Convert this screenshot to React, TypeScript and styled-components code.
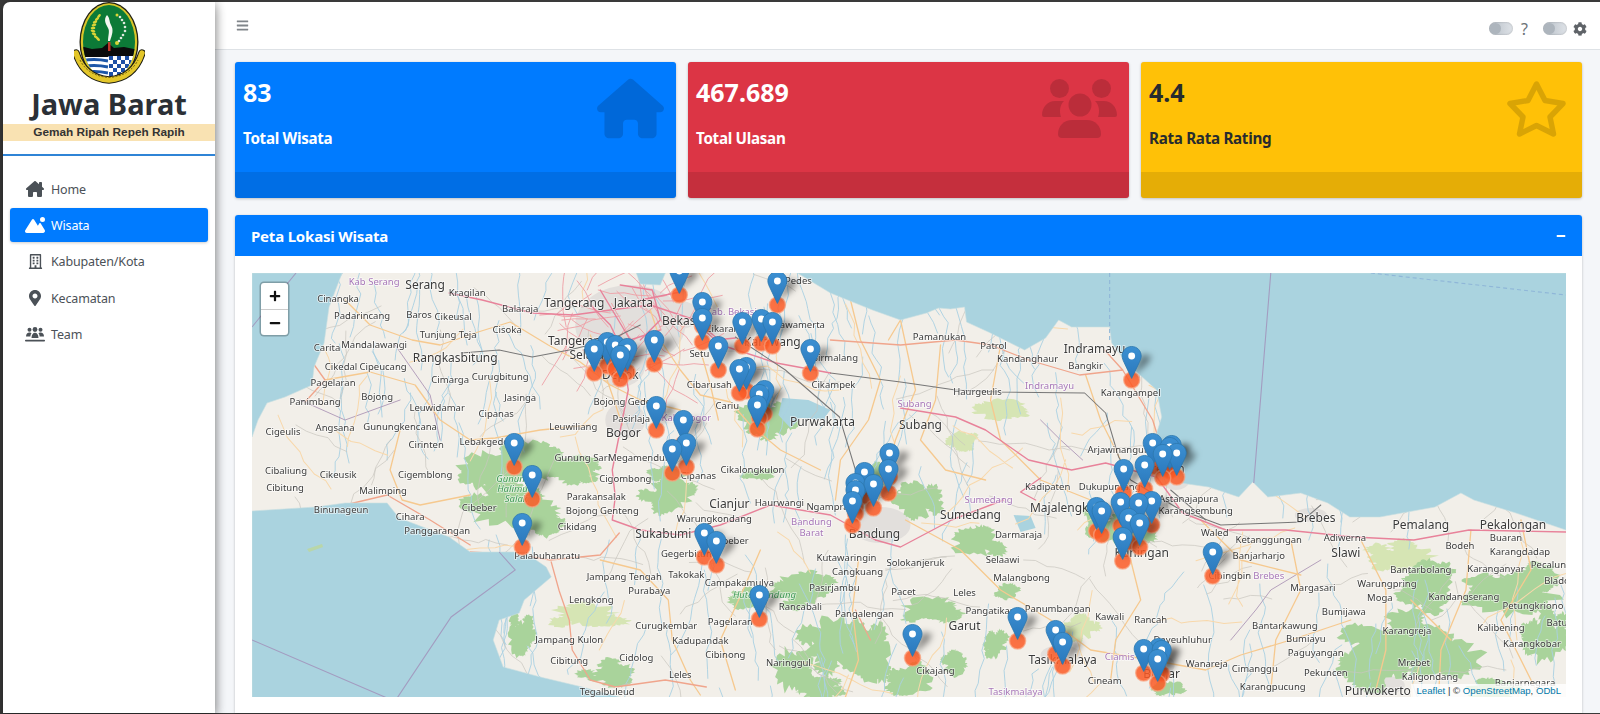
import React from "react";
import styled, { createGlobalStyle } from "styled-components";
import { FaMapMarkerAlt, FaCog, FaBars, FaRegBuilding, FaPlus, FaMinus } from "react-icons/fa";
import { FaMountainSun, FaHouse, FaHouseChimney } from "react-icons/fa6";

const Global = createGlobalStyle`
  html, body { margin: 0; padding: 0; height: 714px; overflow: hidden; background: #343434; }
  * { box-sizing: border-box; }
`;

const Frame = styled.div`
  height: 714px; padding: 2px 0 1px 3px; background: #3a3a3a; display: flex;
  font-family: "Noto Sans", "Open Sans", sans-serif; overflow: hidden;
`;
const Sidebar = styled.aside`
  width: 212px; flex: none; background: #fff; border-top-left-radius: 7px; position: relative; z-index: 2;
  box-shadow: 0 6px 12px rgba(0,0,0,.3), 2px 0 8px rgba(0,0,0,.22);
`;
const Brand = styled.div`
  display: flex; flex-direction: column; align-items: center; height: 154px; border-bottom: 2px solid #2f84d6;
`;
const Title = styled.div`
  font-weight: 700; font-size: 29px; line-height: 34px; color: #2b3036; margin-top: 1px; white-space: nowrap;
`;
const Motto = styled.div`
  align-self: stretch; height: 17px; margin-top: 3px; background: #f9e2b2; text-align: center;
  font-family: "Liberation Sans", sans-serif; font-weight: 700; font-size: 11.800px; line-height: 17px; color: #333;
`;
const Nav = styled.nav` padding: 16px 7px 0; display: flex; flex-direction: column; gap: 2.400px; `;
const NavItem = styled.div<{ $active?: boolean }>`
  height: 34px; border-radius: 3px; display: flex; align-items: center; padding-left: 15px; gap: 6px;
  background: ${p => (p.$active ? "#007bff" : "transparent")};
  color: ${p => (p.$active ? "#fff" : "#4b5157")};
  box-shadow: ${p => (p.$active ? "0 1px 3px rgba(0,0,0,.2)" : "none")};
  font-size: 12.500px; letter-spacing: -.15px;
`;
const NavIcon = styled.span`
  width: 20px; display: flex; justify-content: center; color: inherit;
`;
const Main = styled.main` flex: 1; min-width: 0; display: flex; flex-direction: column; background: #f4f6f9; `;
const TopBar = styled.header`
  height: 48px; flex: none; background: #fff; border-bottom: 1px solid #dee2e6; display: flex; align-items: center;
  padding: 0 13px 0 21px; color: #7b8086;
`;
const Burger = styled.span` display: flex; font-size: 13px; margin-top: -1px; color: #80858a; `;
const Spacer = styled.div` flex: 1; `;
const Toggle = styled.span`
  width: 24px; height: 13px; border-radius: 7px; background: linear-gradient(90deg, #b6bec6, #dfe3e8); display: block;
  position: relative; box-shadow: inset 0 0 2px rgba(0,0,0,.25); margin-top: 6px;
  &::after { content: ""; position: absolute; left: 1px; top: 1px; width: 11px; height: 11px; border-radius: 50%; background: #adb5bd; }
`;
const Help = styled.span` font-size: 16px; line-height: 18px; margin: 6px 15px 0 8px; color: #6c7278; `;
const Gear = styled.span` display: flex; font-size: 14px; margin: 6px 0 0 6px; color: #5f6368; `;
const Content = styled.div` flex: 1; min-height: 0; padding: 12px 18px 0 20px; display: flex; flex-direction: column; gap: 17px; `;
const Stats = styled.div` display: grid; grid-template-columns: repeat(3, 1fr); gap: 12px; flex: none; `;
const Stat = styled.div<{ $bg: string; $fg: string }>`
  height: 136px; border-radius: 3px; background: ${p => p.$bg}; color: ${p => p.$fg}; position: relative; overflow: hidden;
  box-shadow: 0 0 1px rgba(0,0,0,.13), 0 1px 3px rgba(0,0,0,.2); padding: 12px 8px;
`;
const StatValue = styled.div` font-weight: 700; font-size: 25px; line-height: 36px; `;
const StatLabel = styled.div` font-weight: 700; font-size: 15.200px; line-height: 20px; margin-top: 18px; letter-spacing: -.3px; `;
const StatIcon = styled.span<{ $right: number }>`
  position: absolute; right: ${p => p.$right}px; top: 17px; height: 59px; display: flex; align-items: center; color: rgba(0,0,0,.15);
`;
const StatFoot = styled.div` position: absolute; left: 0; right: 0; bottom: 0; height: 26px; background: rgba(0,0,0,.1); `;
const MapCard = styled.section`
  flex: 1; min-height: 0; background: #fff; border-radius: 3px 3px 0 0; overflow: hidden;
  box-shadow: 0 0 1px rgba(0,0,0,.13), 0 1px 3px rgba(0,0,0,.2); display: flex; flex-direction: column;
`;
const CardHead = styled.div`
  height: 41px; flex: none; background: #007bff; color: #fff; display: flex; align-items: center; justify-content: space-between;
  padding: 0 16px 0 16px; font-weight: 700; font-size: 15px; letter-spacing: -.2px;
`;
const CollapseIcon = styled.span` display: flex; font-size: 10px; `;
const CardBody = styled.div` padding: 17px 16px 0 17px; `;
const MapBox = styled.div` height: 424px; position: relative; overflow: hidden; background: #f2efe9; `;
const MapSvg = styled.svg` display: block; width: 100%; height: 100%; filter: blur(.35px); `;
const Zoom = styled.div`
  position: absolute; left: 9px; top: 10px; width: 27px; border-radius: 3px; background: #fff; overflow: hidden;
  box-shadow: 0 0 0 1.500px rgba(0,0,0,.25);
`;
const ZoomBtn = styled.div`
  height: 26px; display: flex; align-items: center; justify-content: center; color: #111; font-size: 12px;
  & + & { border-top: 1px solid #ccc; }
`;
const Attribution = styled.div`
  position: absolute; right: 0; bottom: 0; padding: 0 5px; background: rgba(255,255,255,.8);
  font-family: "Liberation Sans", sans-serif; font-size: 9.600px; line-height: 13px; color: #333;
`;
const AttrLink = styled.span` color: #0078a8; `;

/* ---------- map data (page coordinates) ---------- */
type L = [string, number, number, number?];
// 0 small, 1 big, 2 purple, 3 green
const labels: L[] = [
  ["Kab Serang",374,282,2],["Serang",425,286,1],["Kragilan",467,293],["Balaraja",520,309],["Tangerang",574,304,1],["Jakarta",633,304,1],
  ["Cinangka",338,299],["Padarincang",362,316],["Baros",419,315],["Cikeusal",453,317],["Tunjung Teja",448,335],["Cisoka",507,330],
  ["Bekasi",680,322,1],["Kab. Bekasi",731,312,2],["Cikarang",725,329],["Rawamerta",799,325],["Pedes",798,281],["Carita",327,348],
  ["Mandalawangi",374,345],["Tangerang",578,342,1],["Selatan",590,356,1],["Rangkasbitung",455,359,1],["Cikedal",341,367],["Cipeucang",383,367],
  ["Cimarga",450,380],["Curugbitung",500,377],["Setu",699,354],["Karawang",772,343,1],["Sirmalang",835,358],["Depok",620,376,1],
  ["Pagelaran",333,383],["Panimbang",315,402],["Bojong",377,397],["Leuwidamar",437,408],["Jasinga",520,398],["Bojong Gede",622,402],
  ["Cibarusah",709,385],["Cikampek",833,385],["Cipanas",496,414],["Pasirlaja",631,419],["Kab. Bogor",686,418,2],["Cariu",727,406],
  ["Purwakarta",822,423,1],["Cigeulis",283,432],["Angsana",335,428],["Gunungkencana",400,427],["Leuwiliang",573,427],["Bogor",623,434,1],
  ["Cirinten",426,445],["Lebakgedong",490,442],["Gunung Sari",582,458],["Megamendung",642,458],["Cikalongkulon",752,470],["Cipanas",698,476],
  ["Cibaliung",286,471],["Cikeusik",338,475],["Cigemblong",425,475],["Cigombong",625,479],["Gunung",513,479,3],["Halimun",515,489,3],["Salak",516,499,3],
  ["Cibitung",285,488],["Malimping",383,491],["Parakansalak",596,497],["Bojong Genteng",602,511],["Binunageun",341,510],["Cibeber",479,508],
  ["Cihara",410,517],["Cikidang",577,527],["Panggarangan",437,531],["Cianjur",729,505,1],["Haurwangi",779,503],["Ngamprah",830,507],
  ["Bandung",811,522,2],["Barat",811,533,2],["Bandung",874,535,1],["Warungkondang",714,519],["Sukabumi",663,535,1],["Gegerbitung",689,554],
  ["Cibeber",731,541],["Palabuhanratu",547,556],["Kutawaringin",846,558],["Solokanjeruk",915,563],["Cangkuang",857,572],["Jampang Tengah",624,577],
  ["Takokak",686,575],["Campakamulya",739,583],["Purabaya",649,591],["Pasirjambu",834,588],["Hutan Lindung",764,595,3],["Lengkong",591,600],
  ["Rancabali",800,607],["Pangalengan",864,614],["Pagelaran",730,622],["Curugkembar",666,626],["Jampang Kulon",569,640],["Kadupandak",700,641],
  ["Cibinong",725,655],["Cidolog",636,658],["Cibitung",569,661],["Naringgul",788,663],["Leles",680,675],["Tegalbuleud",607,692],["Pacet",903,592],
  ["Pamanukan",939,337],["Patrol",993,346],["Kandanghaur",1027,359],["Indramayu",1094,350,1],["Bangkir",1085,366],["Haurgeulis",977,392],
  ["Indramayu",1049,386,2],["Karangampel",1130,393],["Subang",914,404,2],["Subang",920,426,1],["Arjawinangun",1118,450],["Cirebon",1162,470,1],
  ["Kadipaten",1047,487],["Dukupuntang",1109,487],["Astanajapura",1188,499],["Sumedang",988,500,2],["Majalengka",1062,509,1],["Karangsembung",1195,511],
  ["Sumedang",970,516,1],["Brebes",1315,519,1],["Pemalang",1420,526,1],["Pekalongan",1512,526,1],["Darmaraja",1018,535],["Waled",1214,533],
  ["Ketanggungan",1268,540],["Adiwerna",1344,538],["Buaran",1505,538],["Bodeh",1459,546],["Karangdadap",1519,552],["Kuningan",1141,554,1],
  ["Slawi",1345,554,1],["Selaawi",1002,560],["Banjarharjo",1258,556],["Bantarbolang",1420,570],["Karanganyar",1495,569],["Pecalungan",1556,565],
  ["Malangbong",1021,578],["Cibingbin",1229,576],["Brebes",1268,576,2],["Warungpring",1386,584],["Blado",1556,581],["Margasari",1312,588],
  ["Moga",1379,598],["Kandangserang",1463,597],["Petungkriono",1532,606],["Leles",964,593],["Pangatikan",990,611],["Panumbangan",1057,609],
  ["Kawali",1109,617],["Bumijawa",1343,612],["Rancah",1150,620],["Bantarkawung",1284,626],["Karangreja",1406,631],["Kalibening",1500,628],
  ["Batur",1558,623],["Garut",964,627,1],["Dayeuhluhur",1182,640],["Bumiayu",1305,639],["Karangkobar",1531,644],["Paguyangan",1315,653],
  ["Wanareja",1206,664],["Ciamis",1119,657,2],["Tasikmalaya",1062,661,1],["Banjar",1161,675,1],["Mrebet",1413,663],["Cimanggu",1254,669],
  ["Pekuncen",1325,673],["Cikajang",935,671],["Kaligondang",1429,677],["Banjarnegara",1524,683],["Cineam",1104,681],["Karangpucung",1272,687],
  ["Purwokerto",1377,692,1],["Tasikmalaya",1015,692,2],
];

const dots: [number, number][] = [
  [679,271],[702,302],[702,318],[777,281],[742,322],[761,319],[772,322],[718,346],[810,349],[654,340],[594,349],[607,342],[615,345],[627,348],[620,355],
  [746,367],[739,369],[764,390],[759,394],[757,405],[656,406],[683,420],[686,443],[672,449],[514,443],[532,475],[889,453],[888,469],[864,472],[873,484],
  [855,483],[855,490],[852,501],[522,523],[704,533],[716,541],[759,595],[1131,356],[1152,443],[1171,445],[1169,447],[1176,453],[1162,454],[1144,465],
  [1123,469],[1096,507],[1101,511],[1120,502],[1138,503],[1151,501],[1128,518],[1139,523],[1122,537],[1212,552],[1017,617],[1055,630],[1062,642],
  [912,634],[1143,649],[1161,650],[1158,648],[1157,659],
];
const pins = [...dots].sort((a, b) => a[1] - b[1]);

const rng = (seed: number) => () => (seed = (seed * 16807) % 2147483647) / 2147483647;
const wander = (r: () => number, x: number, y: number, dx: number, dy: number, steps: number, step: number, jit: number) => {
  let d = `M${x.toFixed(0)} ${y.toFixed(0)}`;
  for (let i = 0; i < steps; i++) {
    x += dx * step + (r() - 0.5) * jit;
    y += dy * step + (r() - 0.5) * jit;
    d += `L${x.toFixed(1)} ${y.toFixed(1)}`;
  }
  return d;
};
const blob = (r: () => number, cx: number, cy: number, rx: number, ry: number) => {
  const n = 34;
  let d = "";
  for (let i = 0; i < n; i++) {
    const a = (i / n) * Math.PI * 2;
    const k = 0.66 + r() * 0.56;
    d += `${i ? "L" : "M"}${(cx + Math.cos(a) * rx * k).toFixed(1)} ${(cy + Math.sin(a) * ry * k).toFixed(1)}`;
  }
  return d + "Z";
};
const cluster = (seed: number, list: [number, number, number, number][]) => {
  const r = rng(seed);
  const out: string[] = [];
  list.forEach(([x, y, a, b]) => {
    out.push(blob(r, x, y, a * 0.82, b * 0.82));
    for (let i = 0; i < 6; i++) {
      const t = r() * Math.PI * 2;
      const d = 0.45 + r() * 0.5;
      out.push(blob(r, x + Math.cos(t) * a * d, y + Math.sin(t) * b * d, a * 0.34, b * 0.34));
    }
  });
  return out;
};

const forests = cluster(991, [
  [490,470,36,26],[530,462,30,24],[575,470,30,14],[508,505,48,26],[545,525,18,14],[669,495,26,18],[669,475,20,9],[765,420,30,20],[880,475,14,12],
  [915,500,24,22],[975,542,28,17],[930,608,32,14],[994,645,13,15],[955,664,13,14],[1007,591,13,9],[1120,530,32,18],[1095,520,12,16],
  [520,637,14,22],[613,674,30,13],[800,590,36,18],[835,640,34,30],[790,670,22,26],[870,655,26,32],[910,680,28,16],[820,690,26,12],[745,600,20,12],
  [1400,648,58,32],[1450,660,40,22],[1370,670,36,20],[1425,590,34,26],[1510,595,54,25],[1545,640,22,30],[1490,690,30,12],[1540,575,20,14],[760,475,18,6],[1170,688,16,8],
]);
const paleGreen = cluster(313, [
  [585,615,38,14],[1405,558,38,16],[1080,627,18,14],[1000,410,30,12],[1190,475,14,8],[960,440,18,10],
]);
const r1 = rng(4711);
const rivers: string[] = [];
for (let i = 0; i < 230; i++) {
  const x = 300 + r1() * 1260;
  const y = 310 + r1() * 380;
  const north = y < 560 && !(x < 900 && y > 530);
  rivers.push(wander(r1, x, y, (r1() - 0.5) * 0.7, north ? -1 : 1, 6 + Math.floor(r1() * 7), 9, 9));
}
const minor: string[] = [];
for (let i = 0; i < 150; i++) {
  const x = 260 + r1() * 1300;
  const y = 285 + r1() * 400;
  const a = r1() * Math.PI * 2;
  minor.push(wander(r1, x, y, Math.cos(a), Math.sin(a), 5 + Math.floor(r1() * 5), 10, 8));
}
const extraOrange: string[] = [];
for (let i = 0; i < 55; i++) {
  const x = 300 + r1() * 1250;
  const y = 295 + r1() * 390;
  const a = r1() * Math.PI * 2;
  extraOrange.push(wander(r1, x, y, Math.cos(a), Math.sin(a), 4 + Math.floor(r1() * 5), 13, 10));
}
const metro: string[] = [];
for (let i = 0; i < 45; i++) {
  const x = 560 + r1() * 140;
  const y = 285 + r1() * 90;
  const a = r1() * Math.PI * 2;
  metro.push(wander(r1, x, y, Math.cos(a), Math.sin(a), 3 + Math.floor(r1() * 3), 12, 6));
}
const orange = [
  "M345 300L370 325L412 340L440 345L478 332L510 322L548 345L580 362L610 385L640 400L680 410",
  "M325 380L370 372L415 385L440 420L470 440L495 438L540 430L590 425",
  "M400 430L390 470L402 500L420 505L470 495",
  "M590 335L600 360L612 395L622 425",
  "M650 310L660 340L680 370L700 395L730 402L750 425L780 450L820 470",
  "M700 350L710 385L718 420",
  "M850 300L860 340L880 380L868 420L840 460L835 500",
  "M888 340L900 320L915 390L895 440L878 500",
  "M940 345L935 400L920 440L945 470L985 480",
  "M1085 375L1100 420L1120 460L1130 490L1125 540L1140 600L1115 640L1110 680",
  "M1000 345L990 400L1000 440L1040 480L1090 500",
  "M905 520L960 550L1000 590L1050 620L1090 650L1150 660L1205 670L1240 655L1290 640L1350 620",
  "M600 560L640 570L668 600L672 640L690 680L700 695",
  "M760 550L745 585L720 640L735 690",
  "M858 560L852 610L858 660L845 697",
  "M1290 540L1300 590L1275 640L1270 690",
  "M1360 540L1385 590L1385 650L1375 690",
  "M1470 530L1465 590L1440 650L1438 690",
  "M1520 520L1530 570L1500 620L1535 690",
  "M1200 520L1240 560L1300 575",
  "M1410 600L1450 640",
];
const pink = [
  "M449 293L482 300L532 313L573 315L610 310L650 305L695 320L727 347L776 363L830 373",
  "M690 318L715 340L735 338",
  "M590 305L610 325L622 350L628 390L622 420L612 470L615 497L612 520L640 530L680 535L720 525L770 505L830 515L875 540",
  "M875 540L900 547L951 520L1003 500",
  "M900 408L955 417L985 430L1028 460L1071 470L1105 463L1156 477L1182 513L1225 530L1285 530L1353 537L1413 540L1468 530L1565 532",
  "M1040 478L1020 492L1035 500",
  "M640 300L665 295L680 292",
  "M620 285L652 290L660 320L640 340",
  "M600 290L630 340L660 330",
];
const salmon = [
  "M830 340L900 345L955 340L990 345L1028 360L1079 375L1122 370L1152 420L1156 433",
  "M1122 370L1104 350",
  "M551 562L559 591L569 620L572 650L590 680L615 687L665 680L706 687",
  "M470 552L520 555L550 560L600 555L619 533",
  "M345 505L387 495L430 520L470 545",
  "M300 345L325 380L305 402",
  "M855 610L870 640",
];
const gray = [
  "M461 353L499 350L532 357L569 350L610 340L640 325",
  "M735 337L785 370L839 417L855 470L860 500",
  "M830 373L900 382L955 390L998 392L1084 393L1105 413L1118 457L1130 480L1180 510L1220 525L1300 522L1320 505",
  "M1170 490L1205 520",
];
const purple = [
  "M1040 420L1060 440L1082 460",
  "M1230 640L1255 610L1270 590L1320 560",
  "M395 345L430 395L440 440",
  "M300 400L345 420L400 400",
];
const seaPath =
  "M252 273L342 273L329 307L324 343L314 367L312 385L285 397L267 403L258 420L252 437Z" +
  "M797 273L830 293L872 310L900 320L926 313L938 308L950 309L964 307L966 322L990 333L1024 350L1045 338L1058 320L1071 327L1109 327L1111 343L1126 363L1156 390L1161 417L1156 433L1168 450L1182 470L1180 483L1208 487L1238 497L1252 482L1267 497L1300 493L1327 503L1349 517L1379 517L1434 507L1460 493L1473 500L1515 513L1565 530L1566 273Z" +
  "M636 273L665 273L660 285L640 284Z" +
  "M252 511L316 507L345 503L387 503L399 518L449 537L470 552L499 552L524 552L546 567L551 577L524 600L519 613L499 620L493 640L503 667L540 677L582 687L623 698L252 698Z";
const lakes = [
  "M782 398L808 400L830 410L822 420L800 418L790 428L778 415Z",
  "M1013 515L1030 516L1035 528L1020 532Z",
];
const urban: [number, number, number, number][] = [
  [630,325,55,40],[620,365,25,22],[625,420,20,18],[880,525,30,18],[680,315,18,14],[730,340,22,12],[1175,480,14,10],[1060,655,20,10],[1160,665,14,10],[1380,685,24,10],[1310,515,16,7],
];

const PinMark = ({ x, y }: { x: number; y: number }) => (
  <g transform={`translate(${x - 10} ${y - 10}) scale(.8)`}>
    <path d="M12.5.6C5.7.6.6 5.9.6 12.5c0 3 1.2 5.4 2.4 8l9.5 20 9.5-20c1.200-2.600 2.400-5 2.400-8C24.400 5.900 19.300.6 12.500.6Z" fill="url(#pinFill)" stroke="#2c77ad" strokeWidth="1" />
    <circle cx="12.500" cy="12.500" r="4.300" fill="#fff" />
  </g>
);

const MapArt = () => (
  <MapSvg viewBox="252 273 1313 424" preserveAspectRatio="none">
    <defs>
      <linearGradient id="pinFill" x1="0" y1="0" x2="0" y2="1">
        <stop offset="0" stopColor="#3c90d2" />
        <stop offset="1" stopColor="#2a78bc" />
      </linearGradient>
      <filter id="soft" x="-50%" y="-50%" width="200%" height="200%"><feGaussianBlur stdDeviation="3" /></filter>
    </defs>
    <rect x="252" y="273" width="1313" height="424" fill="#f2efe9" />
    {urban.map(([x, y, a, b], i) => <ellipse key={i} cx={x} cy={y} rx={a} ry={b} fill="#e2dfdc" />)}
    <path d={paleGreen.join("")} fill="#d6e5b4" />
    <path d={forests.join("")} fill="#a9d39b" />
    {lakes.map((d, i) => <path key={i} d={d} fill="#aad3df" />)}
    <g fill="none" strokeLinejoin="round" strokeLinecap="round">
      <path d={rivers.join("")} stroke="#a9d0e2" strokeWidth=".9" />
      <path d={minor.join("")} stroke="#c9c5bf" strokeWidth=".7" />
      {purple.map((d, i) => <path key={i} d={d} stroke="#a58bb0" strokeWidth=".8" />)}
      <path d={extraOrange.join("")} stroke="#f8d8ab" strokeWidth="1" />
      <path d={metro.join("")} stroke="#ee9fa6" strokeWidth=".9" />
      {orange.map((d, i) => <path key={i} d={d} stroke="#f6c98f" strokeWidth="1.300" />)}
      {salmon.map((d, i) => <path key={i} d={d} stroke="#f0a58c" strokeWidth="1.300" />)}
      {pink.map((d, i) => <path key={i} d={d} stroke="#e8829a" strokeWidth="1.400" />)}
      {gray.map((d, i) => <path key={i} d={d} stroke="#777" strokeWidth="1" />)}
    </g>
    <path d={seaPath} fill="#aad3df" stroke="#c9dfe0" strokeWidth=".6" />
    <path d="M307 549L322 544L323 547L309 552Z" fill="#b9d6a8" />
    <g fill="none" stroke="#a39cc0" strokeWidth="1.100">
      <path d="M252 640L387 698M397 698L451 617L515 570L499 552M1270 273L1253 483M252 327L296 273" />
      <path d="M1109 273L1109 343M1370 273L1565 295" strokeDasharray="4 3" stroke="#8fb6d8" />
    </g>
    <g fontFamily='"Noto Sans", sans-serif' textAnchor="middle" dominantBaseline="middle" stroke="#fff" strokeOpacity=".65" strokeWidth="1.600" paintOrder="stroke">
      {labels.map(([t, x, y, k], i) => (
        <text key={i} x={x} y={y} fontSize={k === 1 ? 12 : 9.500}
          fill={k === 2 ? "#a777b8" : k === 3 ? "#3f9a55" : "#3a3a3a"}
          fontStyle={k === 3 ? "italic" : "normal"}>{t}</text>
      ))}
    </g>
    {pins.map(([x, y], i) => <circle key={i} cx={x} cy={y + 24} r="8" fill="#fb5a26" fillOpacity=".85" stroke="#f9a27f" strokeOpacity=".7" strokeWidth="1.500" />)}
    <g filter="url(#soft)" fill="#000" fillOpacity=".42">
      {pins.map(([x, y], i) => <path key={i} d={`M${x} ${y + 21}L${x + 16} ${y + 8}L${x + 20} ${y}L${x + 10} ${y - 2}Z`} />)}
    </g>
    {pins.map(([x, y], i) => <PinMark key={i} x={x} y={y} />)}
  </MapSvg>
);

const Emblem = () => (
  <svg width="71" height="84" viewBox="74 2 71 84" style={{ flex: "none" }}>
    <defs>
      <clipPath id="ovalIn"><ellipse cx="109" cy="42" rx="26" ry="37" /></clipPath>
    </defs>
    <ellipse cx="109" cy="42" rx="29.500" ry="40" fill="#1e1e12" />
    <ellipse cx="109" cy="42" rx="28.200" ry="38.800" fill="#d8c52a" />
    <ellipse cx="109" cy="42" rx="26" ry="37" fill="#0c7a37" />
    <g clipPath="url(#ovalIn)">
      <rect x="80" y="55" width="58" height="30" fill="#fff" />
      <path d="M80 46L92 49L102 48L108 43L114 48L124 47L138 50L138 57L80 57Z" fill="#0b0b0b" />
      <rect x="108" y="42" width="2.500" height="9" fill="#c0392b" />
      <g fill="none" stroke="#1d57a8" strokeWidth="3">
        <path d="M80 61Q94 58 108 61M80 67Q94 64 108 67M80 73Q94 70 108 73" />
      </g>
      <rect x="108.500" y="56" width="30" height="28" fill="#fff" />
      {[0, 1, 2, 3, 4].map(r => [0, 1, 2, 3, 4, 5].map(c => (r + c) % 2 === 0 ? <rect key={`${r}${c}`} x={109 + c * 4} y={56 + r * 4} width="4" height="4" fill="#1d4fa5" /> : null))}
    </g>
    <path d="M107 15C103 20 106 24 108 28C110 31 108 36 108 41L110 41C112 35 114 30 111 25C109 21 110 18 107 15Z" fill="#f4f7f2" />
    <g fill="#d9d436">
      {[[99,16],[97,19],[95,22],[94,25],[93,28],[93,31],[94,34],[96,37],[98,39]].map(([x, y], i) => <ellipse key={i} cx={x} cy={y} rx="2.400" ry="1.300" transform={`rotate(${-50 + i * 12} ${x} ${y})`} />)}
      <circle cx="117" cy="15" r="1.500" /><circle cx="117" cy="43" r="2" />
    </g>
    <g fill="#dde8dc">
      {[[120,17],[122,20],[124,23],[125,27],[125,31],[123,35],[121,38],[119,41]].map(([x, y], i) => <circle key={i} cx={x} cy={y} r="1.300" />)}
    </g>
    <path d="M76 53Q84 78 109 80Q134 78 142 53" fill="none" stroke="#1e1e12" strokeWidth="7.500" strokeLinecap="round" />
    <path d="M76 53Q84 78 109 80Q134 78 142 53" fill="none" stroke="#e3c62a" strokeWidth="5.500" strokeLinecap="round" />
    <path d="M80 60Q88 76 109 77.500Q130 76 138 60" fill="none" stroke="#6b5a12" strokeWidth="1" strokeDasharray="2 1.500" />
  </svg>
);

const TeamGlyph = () => (
  <svg width="20" height="15" viewBox="0 0 20 15" fill="currentColor">
    <circle cx="4.500" cy="2.700" r="2" /><circle cx="10" cy="2.500" r="2.400" /><circle cx="15.500" cy="2.700" r="2" />
    <path d="M1 9.500C1 7 2.500 5.500 4.500 5.500C5.500 5.500 6 5.800 6.500 6.200C5.700 7.200 5.400 8.300 5.400 9.500Z" />
    <path d="M19 9.500C19 7 17.500 5.500 15.500 5.500C14.500 5.500 14 5.800 13.500 6.200C14.300 7.200 14.600 8.300 14.600 9.500Z" />
    <path d="M6.500 11C6.500 7.800 8 5.800 10 5.800C12 5.800 13.500 7.800 13.500 11Z" />
    <rect x="0" y="12.700" width="20" height="1.800" rx=".8" />
  </svg>
);
const PeopleGlyph = () => (
  <svg width="75" height="59" viewBox="0 0 75 59" fill="currentColor">
    <circle cx="17.500" cy="9.500" r="9.500" /><circle cx="59.500" cy="9.500" r="9.500" /><circle cx="38" cy="26" r="11.500" />
    <path d="M0 36C0 28 6 22 13 22L22 22C18 26 17 32 19 38L2 38Q0 38 0 36Z" />
    <path d="M75 36C75 28 69 22 62 22L53 22C57 26 58 32 56 38L73 38Q75 38 75 36Z" />
    <path d="M16 55C16 47 22 41 30 41L45 41C53 41 59 47 59 55Q59 59 55 59L20 59Q16 59 16 55Z" />
  </svg>
);
const StarGlyph = () => (
  <svg width="61" height="59" viewBox="0 0 61 59">
    <polygon points="30.500,5 39,21.500 57,24.500 44,38 47.500,55 30.500,46.500 13.500,55 17,38 4,24.500 22,21.500" fill="none" stroke="currentColor" strokeWidth="5.500" strokeLinejoin="round" />
  </svg>
);

const navItems = [
  { label: "Home", icon: <FaHouseChimney size={18} /> },
  { label: "Wisata", icon: <FaMountainSun size={20} />, active: true },
  { label: "Kabupaten/Kota", icon: <FaRegBuilding size={15} /> },
  { label: "Kecamatan", icon: <FaMapMarkerAlt size={16} /> },
  { label: "Team", icon: <TeamGlyph /> },
];

const stats = [
  { value: "83", label: "Total Wisata", bg: "#007bff", fg: "#fff", icon: <FaHouse size={67} />, right: 12 },
  { value: "467.689", label: "Total Ulasan", bg: "#dc3545", fg: "#fff", icon: <PeopleGlyph />, right: 12 },
  { value: "4.4", label: "Rata Rata Rating", bg: "#ffc107", fg: "#272b2e", icon: <StarGlyph />, right: 15 },
];

export default function App() {
  return (
    <>
      <Global />
      <Frame>
        <Sidebar>
          <Brand>
            <Emblem />
            <Title>Jawa Barat</Title>
            <Motto>Gemah Ripah Repeh Rapih</Motto>
          </Brand>
          <Nav>
            {navItems.map(n => (
              <NavItem key={n.label} $active={n.active}>
                <NavIcon>{n.icon}</NavIcon>
                {n.label}
              </NavItem>
            ))}
          </Nav>
        </Sidebar>
        <Main>
          <TopBar>
            <Burger><FaBars /></Burger>
            <Spacer />
            <Toggle />
            <Help>?</Help>
            <Toggle />
            <Gear><FaCog /></Gear>
          </TopBar>
          <Content>
            <Stats>
              {stats.map(s => (
                <Stat key={s.label} $bg={s.bg} $fg={s.fg}>
                  <StatValue>{s.value}</StatValue>
                  <StatLabel>{s.label}</StatLabel>
                  <StatIcon $right={s.right}>{s.icon}</StatIcon>
                  <StatFoot />
                </Stat>
              ))}
            </Stats>
            <MapCard>
              <CardHead>
                Peta Lokasi Wisata
                <CollapseIcon><FaMinus /></CollapseIcon>
              </CardHead>
              <CardBody>
                <MapBox>
                  <MapArt />
                  <Zoom>
                    <ZoomBtn><FaPlus /></ZoomBtn>
                    <ZoomBtn><FaMinus /></ZoomBtn>
                  </Zoom>
                  <Attribution><AttrLink>Leaflet</AttrLink> | © <AttrLink>OpenStreetMap</AttrLink>, <AttrLink>ODbL</AttrLink></Attribution>
                </MapBox>
              </CardBody>
            </MapCard>
          </Content>
        </Main>
      </Frame>
    </>
  );
}
